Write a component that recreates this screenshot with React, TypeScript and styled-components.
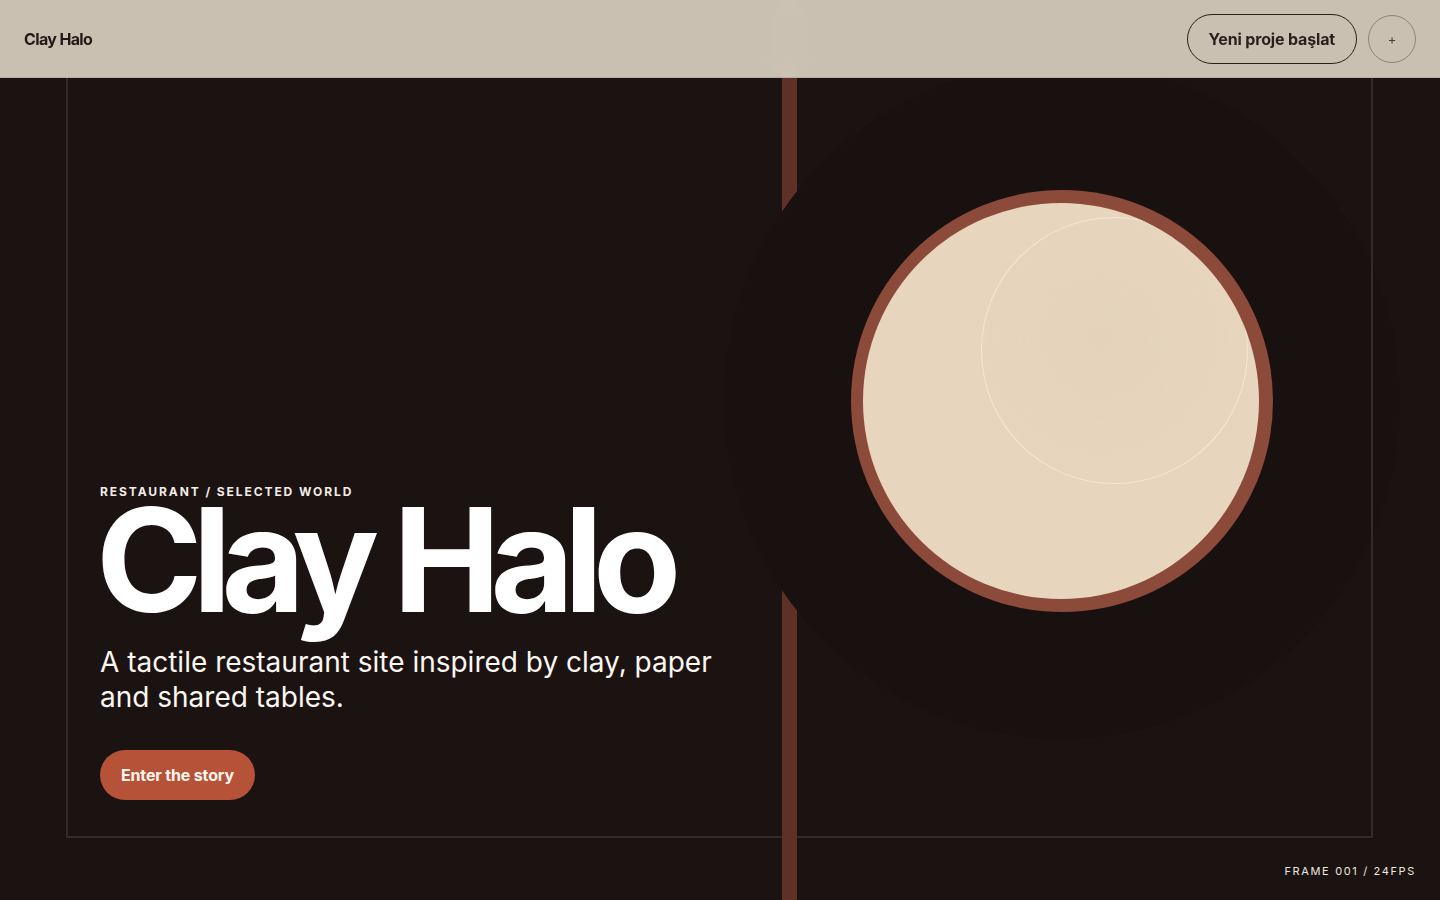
import styled, { createGlobalStyle } from 'styled-components';

const INK = '#1b1311';
const CLAY = '#5f3126';
const RIM = '#8c4a3a';
const CREAM = '#e7d6bd';
const ACCENT = '#b65237';
const LINE = '#342b28';

const GlobalStyle = createGlobalStyle`
  * { box-sizing: border-box; }
  html, body {
    margin: 0;
    padding: 0;
    background: ${INK};
    font-family: Inter, 'Noto Sans', 'Liberation Sans', sans-serif;
    -webkit-font-smoothing: antialiased;
  }
`;

const Page = styled.div`
  position: relative;
  width: 100%;
  height: 900px;
  overflow: hidden;
  background: ${INK};
`;

const Header = styled.header`
  position: absolute;
  top: 0;
  left: 0;
  right: 0;
  z-index: 10;
  height: 78px;
  display: flex;
  align-items: center;
  justify-content: space-between;
  padding: 0 24px;
  background: rgba(216, 207, 192, 0.92);
  backdrop-filter: blur(14px);
  border-bottom: 1px solid #b9ae9f;
`;

const Brand = styled.div`
  font-size: 16px;
  font-weight: 700;
  letter-spacing: -0.04em;
  color: #231915;
`;

const HeaderActions = styled.div`
  display: flex;
  align-items: center;
  gap: 11px;
`;

const PillButton = styled.button`
  height: 50px;
  padding: 0 21px;
  border-radius: 25px;
  border: 1px solid #2a1f1b;
  background: transparent;
  font-family: inherit;
  font-size: 16px;
  font-weight: 700;
  letter-spacing: -0.01em;
  color: #2a1f1b;
`;

const RoundButton = styled.button`
  width: 48px;
  height: 48px;
  border-radius: 50%;
  border: 1px solid #8e8476;
  background: transparent;
  display: flex;
  align-items: center;
  justify-content: center;
  padding: 0;
  color: #4a3f38;
  font-family: inherit;
  font-size: 13px;
`;

const Stage = styled.main`
  height: 100%;
  padding: 62px 67px 62px 66px;
`;

/* left/top/bottom edges sit under the clay bar; the right edge is drawn
   above the halo so it stays continuous like in the mockup */
const Frame = styled.section`
  position: relative;
  height: 100%;
  display: grid;
  grid-template-columns: 1fr 556px;
  padding: 0 33px 36px 32px;
  border: 2px solid ${LINE};
  border-right: 0;

  &::after {
    content: '';
    position: absolute;
    top: -2px;
    bottom: -2px;
    right: 0;
    width: 2px;
    background: ${LINE};
    pointer-events: none;
    z-index: 2;
  }
`;

const ClayBar = styled.div`
  position: absolute;
  top: -64px;
  bottom: -64px;
  left: 714px;
  width: 15px;
  background: ${CLAY};
  z-index: 0;
`;

const Copy = styled.div`
  position: relative;
  z-index: 3;
  display: flex;
  flex-direction: column;
  justify-content: flex-end;
  align-items: flex-start;
`;

const Eyebrow = styled.div`
  font-size: 12px;
  font-weight: 700;
  letter-spacing: 0.16em;
  color: #f4ece6;
  margin-bottom: 2px;
`;

const Title = styled.h1`
  margin: -12px 0 0 -4px;
  font-size: 144px;
  line-height: 0.98;
  font-weight: 700;
  letter-spacing: -0.07em;
  color: #ffffff;
`;

const Lede = styled.p`
  margin: 15px 0 0;
  max-width: 640px;
  font-size: 28px;
  line-height: 35px;
  font-weight: 400;
  color: #fbf6f2;
`;

const Cta = styled.button`
  margin-top: 35px;
  height: 50px;
  padding: 0 21px;
  border: 0;
  border-radius: 25px;
  background: ${ACCENT};
  color: #fff6ef;
  font-family: inherit;
  font-size: 16px;
  font-weight: 700;
  letter-spacing: -0.01em;
`;

const Visual = styled.div`
  position: relative;
  z-index: 1;
  display: flex;
  justify-content: center;
  align-self: start;
  padding-top: 126px;
`;

const Halo = styled.div`
  position: absolute;
  top: -1px;
  left: 50%;
  width: 676px;
  height: 676px;
  margin-left: -338px;
  border-radius: 50%;
  background: #191110;
`;

const Plate = styled.div`
  position: relative;
  width: 422px;
  height: 422px;
  border-radius: 50%;
  background: ${RIM};
  display: flex;
  align-items: center;
  justify-content: center;
`;

const Well = styled.div`
  position: relative;
  width: 396px;
  height: 396px;
  margin-left: -2px;
  border-radius: 50%;
  background: ${CREAM};
  overflow: hidden;
`;

const Glint = styled.div`
  position: absolute;
  top: 14px;
  left: 118px;
  width: 267px;
  height: 267px;
  border-radius: 50%;
  border: 1.5px solid rgba(255, 246, 232, 0.55);
  background: radial-gradient(circle at 45% 45%, rgba(225, 208, 184, 0.5) 0%, rgba(231, 214, 189, 0) 70%);
`;

const Footnote = styled.div`
  position: absolute;
  right: 24px;
  bottom: 22px;
  font-size: 11px;
  letter-spacing: 0.15em;
  color: #efe6df;
  z-index: 3;
`;

export default function App() {
  return (
    <>
      <GlobalStyle />
      <Page>
        <Header>
          <Brand>Clay Halo</Brand>
          <HeaderActions>
            <PillButton>Yeni proje başlat</PillButton>
            <RoundButton aria-label="Ekle">+</RoundButton>
          </HeaderActions>
        </Header>
        <Stage>
          <Frame>
            <ClayBar />
            <Copy>
              <Eyebrow>RESTAURANT / SELECTED WORLD</Eyebrow>
              <Title>Clay Halo</Title>
              <Lede>A tactile restaurant site inspired by clay, paper and shared tables.</Lede>
              <Cta>Enter the story</Cta>
            </Copy>
            <Visual>
              <Halo />
              <Plate>
                <Well>
                  <Glint />
                </Well>
              </Plate>
            </Visual>
          </Frame>
        </Stage>
        <Footnote>FRAME 001 / 24FPS</Footnote>
      </Page>
    </>
  );
}
